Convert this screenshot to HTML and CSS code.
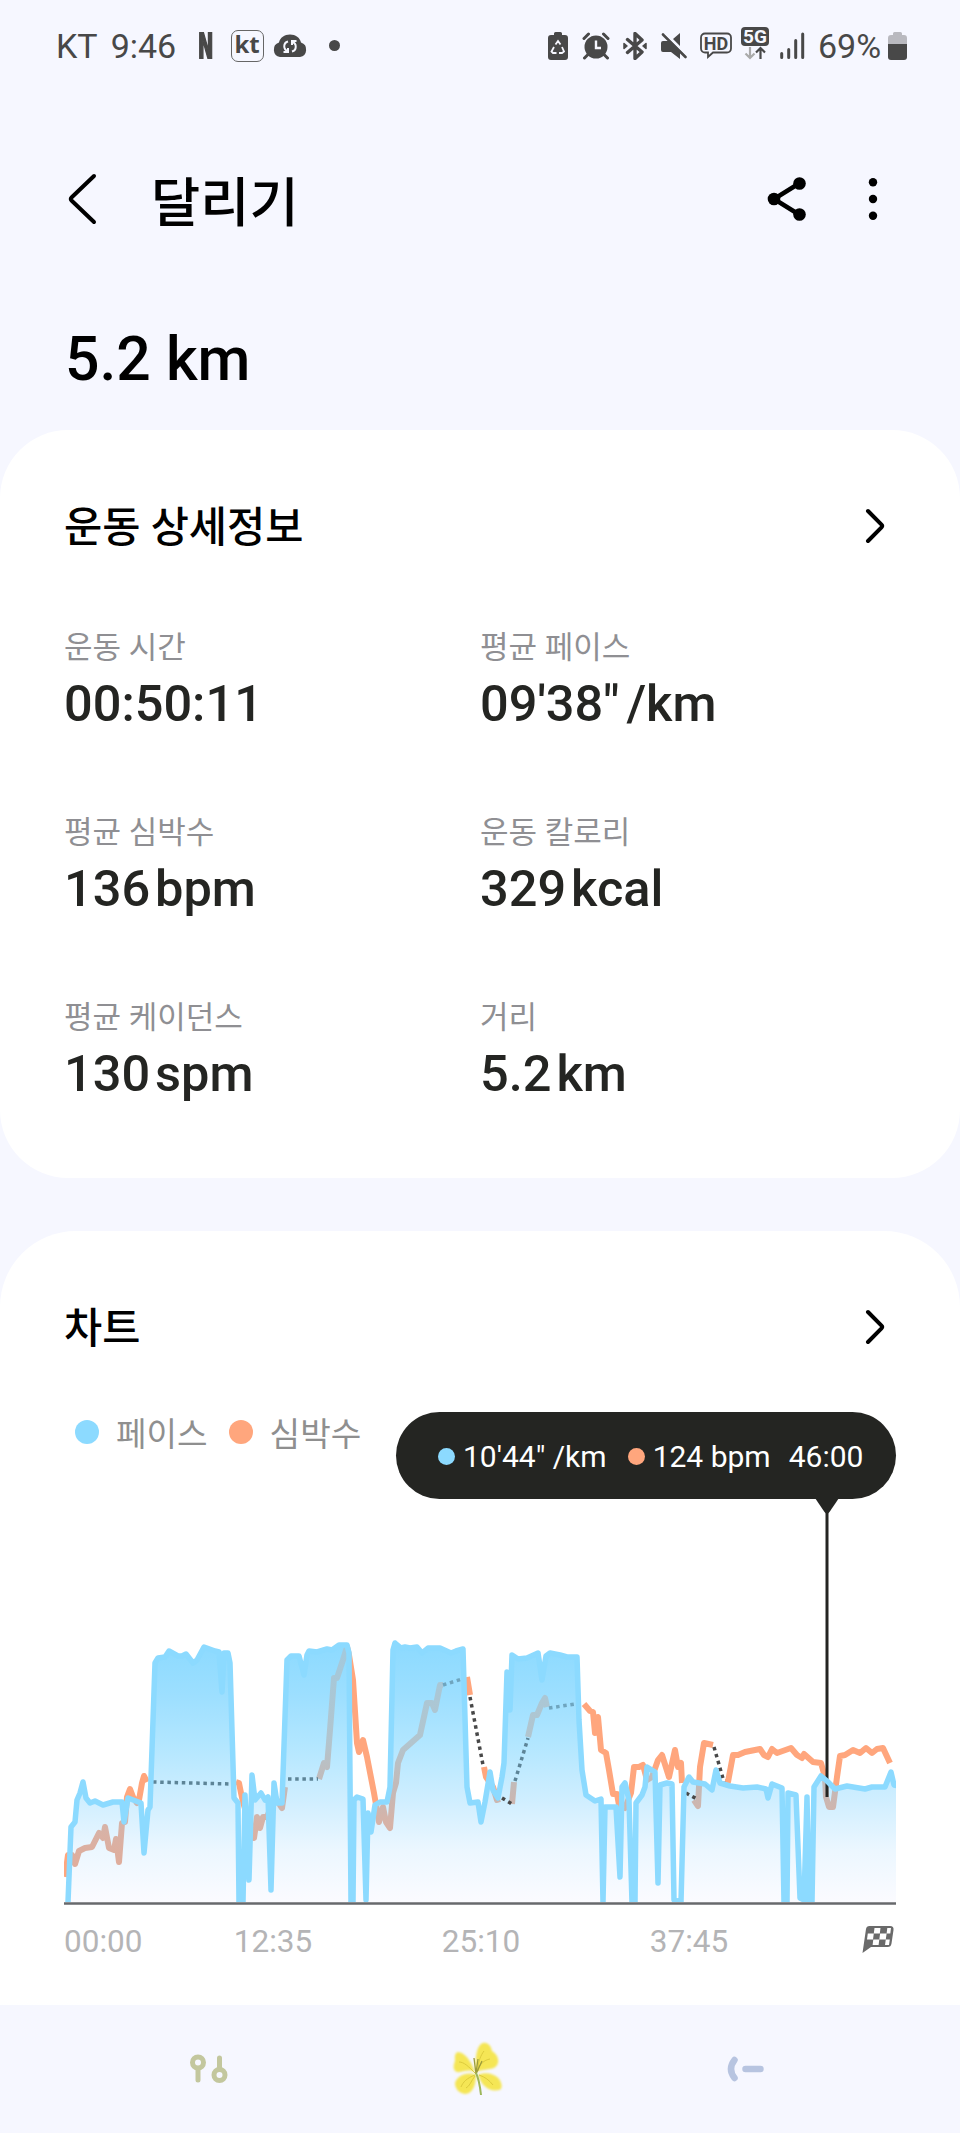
FILE: index.html
```html
<!DOCTYPE html>
<html lang="ko">
<head>
    <meta charset="UTF-8">
    <meta name="viewport" content="width=device-width, initial-scale=1.0">
    <title>달리기</title>
    <link rel="stylesheet" href="styles.css">
</head>
<body>
    <div class="statusbar">
        <div class="status-left">
            <span class="carrier">KT</span>
            <span class="clock">9:46</span>
            <span class="badge-n">N</span>
            <span class="badge-kt">kt</span>
            <svg class="icon-cloud" width="36" height="24" viewBox="0 0 36 24">
                <path d="M8 23a7.500 7.500 0 0 1-1-14.500C8 3.500 12.500.500 18 .500S28 3.500 29 8.500A7.500 7.500 0 0 1 28 23z" fill="#484848"/>
                <path d="M16 7.500c-5 1.500-5 8 0 10M11.500 18H16v-4M20 17.500c5-1.500 5-8 0-10M24.500 7H20v4" fill="none" stroke="#f6f7ff" stroke-width="2"/>
            </svg>
            <span class="status-dot"></span>
        </div>
        <div class="status-right">
            <svg class="icon-saver" width="20" height="28" viewBox="0 0 20 28">
                <path d="M6 3V1.500A1.500 1.500 0 0 1 7.500 0h5A1.500 1.500 0 0 1 14 1.500V3h3a3 3 0 0 1 3 3v19a3 3 0 0 1-3 3H3a3 3 0 0 1-3-3V6a3 3 0 0 1 3-3z" fill="#484848"/>
                <path d="M7.500 12.500L10 9l2.500 3.500M14 15l2 4.500-2 1.500h-3M8.500 21H5l-1.500-1.500L6 15" fill="none" stroke="#f6f7ff" stroke-width="1.800"/>
            </svg>
            <svg width="28" height="28" viewBox="0 0 28 28">
                <circle cx="14" cy="15" r="11.500" fill="#484848"/>
                <path d="M2 6.500L6.500 2M26 6.500L21.500 2M5.500 23l-3 3M22.500 23l3 3" stroke="#484848" stroke-width="3" stroke-linecap="round"/>
                <path d="M14 8.500V16h5" fill="none" stroke="#f6f7ff" stroke-width="2.400"/>
            </svg>
            <svg width="26" height="28" viewBox="0 0 26 28">
                <path d="M5.500 7.500L20 20l-7 6.500v-25L20 8 5.500 20.500" fill="none" stroke="#484848" stroke-width="3.400" stroke-linejoin="round" stroke-linecap="round"/>
                <path d="M2 11.500v5l3-2.500zM24 11.500v5L21 14z" fill="#484848" stroke="#484848" stroke-width="1.500" stroke-linejoin="round"/>
            </svg>
            <svg class="icon-mute" width="27" height="28" viewBox="0 0 27 28">
                <path d="M3 9h7.500L20 19v8l-9-7H3a2 2 0 0 1-2-2v-7a2 2 0 0 1 2-2zM20 1v13l-7-7z" fill="#484848"/>
                <path d="M3 2.500L25.500 25" stroke="#484848" stroke-width="2.600" stroke-linecap="round"/>
                <path d="M5 1.500L27 23" stroke="#f6f7ff" stroke-width="1.200"/>
            </svg>
            <svg class="icon-hd" width="32" height="27" viewBox="0 0 32 27">
                <path d="M5 1.500h22a4 4 0 0 1 4 4v11a4 4 0 0 1-4 4H13L8 25v-4.500H5a4 4 0 0 1-4-4v-11a4 4 0 0 1 4-4z" fill="none" stroke="#484848" stroke-width="1.800"/>
                <text x="16" y="17.500" text-anchor="middle" class="hd-text">HD</text>
            </svg>
            <svg class="icon-5g" width="28" height="41" viewBox="0 -4 28 41">
                <rect width="28" height="19" rx="4" fill="#484848"/>
                <text x="14" y="16" text-anchor="middle" class="g5-text">5G</text>
                <path d="M9 20v11M4.500 26.500L9 31l4.500-4.500" fill="none" stroke="#aaa" stroke-width="2.200"/>
                <path d="M19.500 32V21M15 25.500l4.500-4.500 4.500 4.500" fill="none" stroke="#484848" stroke-width="2.200"/>
            </svg>
            <svg class="icon-signal" width="25" height="27" viewBox="0 0 25 27">
                <path d="M1.700 21.500v4M8.700 17.500v8M15.700 8.500v17M22.700 2v23.500" stroke="#484848" stroke-width="3" stroke-linecap="round"/>
            </svg>
            <span class="percent">69%</span>
            <svg width="19" height="28" viewBox="0 0 19 28">
                <path d="M0 12V6a3 3 0 0 1 3-3h2V1.500A1.500 1.500 0 0 1 6.500 0h6A1.500 1.500 0 0 1 14 1.500V3h2a3 3 0 0 1 3 3v6z" fill="#b9b9bf"/>
                <path d="M0 12h19v13a3 3 0 0 1-3 3H3a3 3 0 0 1-3-3z" fill="#484848"/>
            </svg>
        </div>
    </div>

    <header class="appbar">
        <svg class="back" width="30" height="52" viewBox="0 0 30 52">
            <path d="M26 3L3.500 24.500q-1.500 1.500 0 3L26 49" fill="none" stroke="#000" stroke-width="4" stroke-linecap="round"/>
        </svg>
        <h1>달리기</h1>
        <svg class="share" width="40" height="46" viewBox="0 0 40 46">
            <path d="M32 7.500L7 23l25 15.500" fill="none" stroke="#000" stroke-width="4.500"/>
            <circle cx="32.500" cy="7.500" r="6.300"/>
            <circle cx="7" cy="23" r="6.300"/>
            <circle cx="32.500" cy="38.500" r="6.300"/>
        </svg>
        <svg class="more" width="10" height="44" viewBox="0 0 10 44">
            <circle cx="5" cy="5.300" r="4.200"/>
            <circle cx="5" cy="22" r="4.200"/>
            <circle cx="5" cy="38.700" r="4.200"/>
        </svg>
    </header>

    <div class="distance">5.2 km</div>

    <section class="card details">
        <div class="card-head">
            <h2>운동 상세정보</h2>
            <svg width="20" height="36" viewBox="0 0 20 36">
                <path d="M3 3l13.500 13.700q1.300 1.300 0 2.600L3 33" fill="none" stroke="#000" stroke-width="4" stroke-linecap="round"/>
            </svg>
        </div>
        <div class="stats">
            <div class="stat">
                <div class="label">운동 시간</div>
                <div class="value">00:50:11</div>
            </div>
            <div class="stat">
                <div class="label">평균 페이스</div>
                <div class="value pace-value">09'38"<span class="unit">/km</span></div>
            </div>
            <div class="stat">
                <div class="label">평균 심박수</div>
                <div class="value">136<span class="unit">bpm</span></div>
            </div>
            <div class="stat">
                <div class="label">운동 칼로리</div>
                <div class="value">329<span class="unit">kcal</span></div>
            </div>
            <div class="stat">
                <div class="label">평균 케이던스</div>
                <div class="value">130<span class="unit">spm</span></div>
            </div>
            <div class="stat">
                <div class="label">거리</div>
                <div class="value">5.2<span class="unit">km</span></div>
            </div>
        </div>
    </section>

    <section class="card chart-card">
        <div class="card-head">
            <h2>차트</h2>
            <svg width="20" height="36" viewBox="0 0 20 36">
                <path d="M3 3l13.500 13.700q1.300 1.300 0 2.600L3 33" fill="none" stroke="#000" stroke-width="4" stroke-linecap="round"/>
            </svg>
        </div>
        <div class="chart-top">
            <div class="legend">
                <span class="dot pace"></span><span class="legend-name">페이스</span>
                <span class="dot heart"></span><span class="legend-name">심박수</span>
            </div>
            <div class="tooltip">
                <span class="dot small pace"></span><span class="tip-pace">10'44" /km</span>
                <span class="dot small heart"></span><span class="tip-heart">124 bpm</span>
                <span class="tip-time">46:00</span>
            </div>
        </div>
        <svg class="chart" width="832" height="408" viewBox="64 1499 832 408">
            <defs>
                <linearGradient id="paceFill" gradientUnits="userSpaceOnUse" x1="0" y1="1645" x2="0" y2="1902">
                    <stop offset="0" stop-color="#8cdaff"/>
                    <stop offset="0.200" stop-color="#9ddfff"/>
                    <stop offset="0.400" stop-color="#b4e7ff"/>
                    <stop offset="0.600" stop-color="#cfeeff"/>
                    <stop offset="0.800" stop-color="#ecf7ff"/>
                    <stop offset="1" stop-color="#fbfbff"/>
                </linearGradient>
                <linearGradient id="heartFaded" gradientUnits="userSpaceOnUse" x1="0" y1="1650" x2="0" y2="1880">
                    <stop offset="0" stop-color="#a3c9dc"/>
                    <stop offset="0.400" stop-color="#b2c5ce"/>
                    <stop offset="0.600" stop-color="#c4b9b7"/>
                    <stop offset="0.750" stop-color="#d6b3a8"/>
                    <stop offset="1" stop-color="#e3ab98"/>
                </linearGradient>
                <path id="pace" d="M68 1902L71 1827 75 1822 77 1800 80 1793 83 1782 86 1798 90 1803 95 1801 103 1805 113 1802 122 1802 124 1822 128 1798 141 1803 144 1853 148 1810 150 1807 155 1663 158 1658 165 1657 169 1651 178 1656 182 1656 186 1654 193 1663 197 1660 204 1647 215 1651 219 1652 222 1692 224 1653 228 1653 230 1663 234 1798 238 1803 239 1902 243 1902 245 1795 249 1880 252 1775 255 1800 261 1793 265 1800 268 1797 271 1890 274 1783 277 1803 282 1803 287 1660 291 1656 299 1656 304 1675 307 1655 309 1651 317 1652 327 1649 332 1650 339 1645 347 1645 349 1653 351 1902 353 1902 354 1800 357 1797 363 1799 366 1900 368 1813 371 1832 375 1805 380 1802 387 1802 390 1787 393 1650 395 1643 401 1648 405 1647 410 1648 417 1647 422 1653 428 1648 440 1648 451 1653 456 1651 463 1649 467 1787 470 1803 478 1802 481 1822 485 1802 490 1772 493 1790 498 1798 502 1777 504 1763 507 1672 510 1710 512 1655 518 1659 527 1658 538 1653 542 1680 546 1656 550 1653 560 1655 567 1657 577 1657 579 1720 582 1770 586 1795 595 1801 601 1799 603 1902 605 1807 616 1807 620 1877 622 1787 625 1783 629 1800 632 1902 635 1902 636 1803 642 1795 645 1787 647 1767 655 1772 658 1883 660 1785 667 1783 672 1784 674 1900 681 1902 684 1787 689 1777 693 1782 705 1784 712 1790 716 1770 720 1783 730 1786 743 1788 757 1787 766 1789 768 1798 772 1784 782 1788 784 1902 787 1902 788 1793 796 1795 800 1898 804 1900 807 1797 809 1902 812 1902 814 1787 821 1776 827 1781 835 1789 847 1786 865 1789 872 1787 885 1787 891 1772 894 1785 902 1787 902 1902"/>
                <path id="heart" d="M65 1877L68 1855 72 1855 75 1864 79 1851 85 1848 92 1847 99 1833 103 1838 105 1827 109 1848 114 1850 116 1839 119 1862 122 1823 125 1822 127 1797 130 1789 133 1797 137 1803 139 1800 142 1783 144 1776 147 1782M236 1782L239 1783 241 1793 243 1802 254 1838 257 1817 260 1828 263 1817 267 1817 275 1797 280 1805 282 1808 285 1787M319 1779L324 1763 327 1767 330 1730 334 1678 337 1678 343 1660 347 1647 349 1655 353 1680 357 1743 359 1752 363 1740 367 1757 374 1793 379 1822 383 1807 386 1822 390 1828 393 1793 396 1783 398 1763 403 1750 420 1735 427 1703 432 1703 435 1710 440 1685 443 1685M467 1677L470 1695M484 1767L486 1777 493 1787 497 1800 500 1799M512 1804L514 1782M528 1737L533 1715 537 1715 542 1703 545 1698 547 1707M584 1704L590 1711 593 1712 595 1733 598 1717 601 1750 606 1753 609 1770 613 1794 617 1794 619 1805 625 1808 631 1793 634 1767 639 1767 643 1765 647 1780 652 1777 658 1760 662 1755 669 1777 675 1750 678 1767 681 1763 682 1783M694 1800L698 1806 700 1767 704 1743 713 1745M725 1782L728 1782 733 1755 738 1755 745 1752 760 1749 764 1755 768 1757 772 1749 777 1753 791 1748 797 1755 802 1758 804 1754 813 1762 821 1763 825 1777 826 1797 829 1807 833 1807 837 1777 840 1756 845 1755 853 1750 860 1753 866 1748 872 1753 877 1749 883 1748 890 1763"/>
                <clipPath id="paceArea"><use href="#pace"/></clipPath>
                <clipPath id="plot"><rect x="64" y="1499" width="832" height="403"/></clipPath>
            </defs>
            <g clip-path="url(#plot)" fill="none" stroke-linejoin="round">
                <use href="#heart" stroke="#ffa67d" stroke-width="6"/>
                <use href="#pace" fill="url(#paceFill)"/>
                <g clip-path="url(#paceArea)">
                    <use href="#heart" stroke="url(#heartFaded)" stroke-width="6"/>
                </g>
                <path d="M153 1782L231 1784M288 1779H318M515 1781L528 1738" class="gap"/>
                <path d="M443 1685L462 1679M549 1708L575 1704" class="gap light"/>
                <path d="M470 1697L483 1765M502 1798L512 1804M686 1793L697 1799M714 1747L724 1782" class="gap dark"/>
                <path d="M827 1512V1797" stroke="#242522" stroke-width="3"/>
                <use href="#pace" stroke="#8cdaff" stroke-width="5.500"/>
            </g>
            <path d="M815 1498h24l-9.500 14q-2.500 3-5 0z" fill="#242522"/>
            <path d="M64 1903.500H896" stroke="#67696c" stroke-width="2.500"/>
        </svg>
        <div class="axis">
            <span>00:00</span>
            <span>12:35</span>
            <span>25:10</span>
            <span>37:45</span>
            <svg width="32" height="27" viewBox="0 0 32 27">
                <path d="M7.500 0H28q4 0 3.500 4l-2 13.500q-.5 3.500-4 3.500H9L.500 27 4 3Q4.500 0 7.500 0z" fill="#6a6a6a"/>
                <path d="M12.500 2h6l-.7 5.500h-6zM11.800 7.500l-.8 6H5l.8-6zM24.600 7.500l-.8 6h-6.500l.8-6zM17.300 13.500l-.7 5.500h-6l.7-5.500zM24.600 7.500l.7-5.500H29l-.7 5.500zM23.800 13.500h4l-.8 5.500h-4z" fill="#fff"/>
            </svg>
        </div>
    </section>

    <nav class="navbar">
        <svg width="38" height="30" viewBox="0 0 38 30">
            <g fill="none" stroke="#c3c79e" stroke-width="5" stroke-linecap="round">
                <ellipse cx="8" cy="8.500" rx="5.500" ry="5.500"/>
                <path d="M8 16v10M29.500 4v11"/>
                <ellipse cx="29.500" cy="21" rx="5.500" ry="5.500"/>
            </g>
        </svg>
        <svg width="54" height="56" viewBox="0 0 54 56">
            <defs>
                <filter id="soft" x="-20%" y="-20%" width="140%" height="140%"><feGaussianBlur stdDeviation="1.300"/></filter>
            </defs>
            <g fill="#f5e654" filter="url(#soft)">
                <path d="M25 31C24 19 25 4 32 2c5-1 8 3 9 8 8 5 8 14 2 17-5 2-11 1-18 4z"/>
                <path d="M24 31C21 23 16 12 7 11c-4 1-3 6-3 9-3 7-1 12 5 11 5-1 9-3 15 0z"/>
                <path d="M25 34C16 30 6 35 4 42c0 6 4 10 10 11 8 0 11-10 11-19z"/>
                <path d="M27 34c6-3 16-2 21 4 3 4 4 10 0 11-9 2-17-3-21-15z"/>
            </g>
            <path d="M25 33C17 25 13 21 8 21M25 31c4-8 8-12 14-13M27 30c0-10 3-16 6-20M24 34c-8 3-12 7-14 12M24 35c-4 5-5 10-9 12M28 34c6 2 10 5 14 10" fill="none" stroke="#dccb3c"/>
            <path d="M25 33L23 17M25 32l2-14M25 33l6-13" stroke="#9a9a3c" stroke-width="1.300"/>
            <path d="M25 32c3 6 4 13 5 22" fill="none" stroke="#9db65a" stroke-width="2"/>
        </svg>
        <svg width="38" height="26" viewBox="0 0 38 26">
            <path d="M7.500 4q-7 9 0 18M18.500 13h15" fill="none" stroke="#b7c4e0" stroke-width="6.500" stroke-linecap="round"/>
        </svg>
    </nav>
</body>
</html>
```

FILE: styles.css
```css
* {
    box-sizing: border-box;
}
body {
    margin: 0;
    width: 960px;
    height: 2133px;
    overflow: hidden;
    background: #f6f7ff;
    color: #000;
    font-family: Roboto, "Noto Sans CJK KR", sans-serif;
}
h1, h2 {
    margin: 0;
    font-weight: 500;
}
svg {
    display: block;
    flex: none;
}

/* status bar */
.statusbar {
    display: flex;
    justify-content: space-between;
    height: 91px;
    padding: 0 53px 0 56px;
    color: #484848;
    font-size: 34px;
}
.status-left, .status-right {
    display: flex;
    align-items: center;
}
.carrier {
    margin-right: 13px;
}
.clock {
    width: 87px;
}
.badge-n {
    width: 33px;
    font: bold 34px/40px "DejaVu Sans Condensed", sans-serif;
    -webkit-text-stroke: 2px #484848;
    transform: scaleX(0.6);
    transform-origin: left;
}
.badge-kt {
    width: 33px;
    height: 32px;
    border: 1.5px solid #666;
    border-radius: 7px;
    font: bold 24px/26px "Open Sans", sans-serif;
    text-align: center;
}
.icon-cloud {
    margin: 0 21px 0 8px;
}
.status-dot {
    width: 11px;
    height: 11px;
    border-radius: 50%;
    background: #484848;
}
.status-right {
    gap: 12px;
}
.icon-saver {
    margin-right: 2px;
}
.icon-mute, .icon-signal {
    margin-right: 1px;
}
.icon-hd {
    margin-right: -3px;
}
.icon-5g {
    margin: -5px -1px 0 0;
}
.hd-text {
    font: bold 18px Roboto, sans-serif;
    fill: #484848;
}
.g5-text {
    font: bold 19px Roboto, sans-serif;
    fill: #f6f7ff;
}
.percent {
    width: 63px;
    margin-right: -5px;
}

/* app bar */
.appbar {
    display: flex;
    align-items: center;
    height: 216px;
    padding: 0 82px 0 68px;
    margin-bottom: -1px;
}
.appbar h1 {
    flex: 1;
    margin: -2px 0 0 53px;
    font-size: 53.5px;
}
.share {
    margin-right: 61px;
}
.distance {
    height: 124px;
    padding-left: 65px;
    font-size: 60.7px;
    font-weight: 500;
    line-height: 108px;
}

/* cards */
.card {
    padding: 0 64px;
    background: #fff;
    border-radius: 68px;
}
.card-head {
    display: flex;
    align-items: center;
    justify-content: space-between;
    padding-right: 11px;
}
.card h2 {
    padding-top: 3px;
    font-size: 41.5px;
    line-height: 57px;
}
.details {
    height: 748px;
    padding-top: 66px;
    margin-bottom: 53px;
}
.stats {
    display: grid;
    grid-template-columns: 416px 416px;
    grid-auto-rows: 185px;
    padding-top: 69px;
}
.label {
    color: #8f8f93;
    font-size: 31px;
    line-height: 46px;
}
.value {
    color: #242522;
    font-size: 50.5px;
    font-weight: 500;
    line-height: 65px;
}
.unit {
    margin-left: 5px;
}
.pace-value .unit {
    margin-left: 7px;
}

/* chart */
.chart-card {
    height: 774px;
    padding-top: 66px;
    border-radius: 76px 76px 0 0;
}
.chart-top {
    display: flex;
    justify-content: space-between;
    margin-top: 55px;
}
.legend {
    display: flex;
    align-items: center;
    height: 40px;
    padding-left: 11px;
    color: #8f8f8f;
    font-size: 33.2px;
}
.dot {
    width: 24px;
    height: 24px;
    border-radius: 50%;
}
.pace {
    background: #8cdaff;
}
.heart {
    background: #ffa67d;
}
.legend-name {
    margin: -2px 21px 0 17px;
}
.tooltip {
    display: flex;
    align-items: center;
    width: 500px;
    height: 87px;
    padding: 2px 0 0 42px;
    border-radius: 44px;
    background: #242522;
    color: #fff;
    font-size: 30px;
}
.small {
    width: 17px;
    height: 17px;
}
.tip-pace {
    margin: 0 21px 0 8px;
}
.tip-heart {
    margin: 0 18px 0 8px;
}
.gap {
    stroke: #5d8497;
    stroke-width: 3.5px;
    stroke-dasharray: 3.5 3.7;
}
.light {
    stroke: #6fa5bf;
}
.dark {
    stroke: #484848;
}
.axis {
    display: flex;
    align-items: center;
    height: 68px;
    color: #b4b4b6;
    font-size: 31.5px;
}
.axis span {
    width: 208px;
    text-align: center;
}
.axis span:first-child {
    width: 105px;
    text-align: left;
}
.axis svg {
    margin: -4px 0 0 69px;
}

.navbar {
    display: flex;
    align-items: center;
    justify-content: space-between;
    height: 128px;
    padding: 0 195px 0 190px;
}
```
